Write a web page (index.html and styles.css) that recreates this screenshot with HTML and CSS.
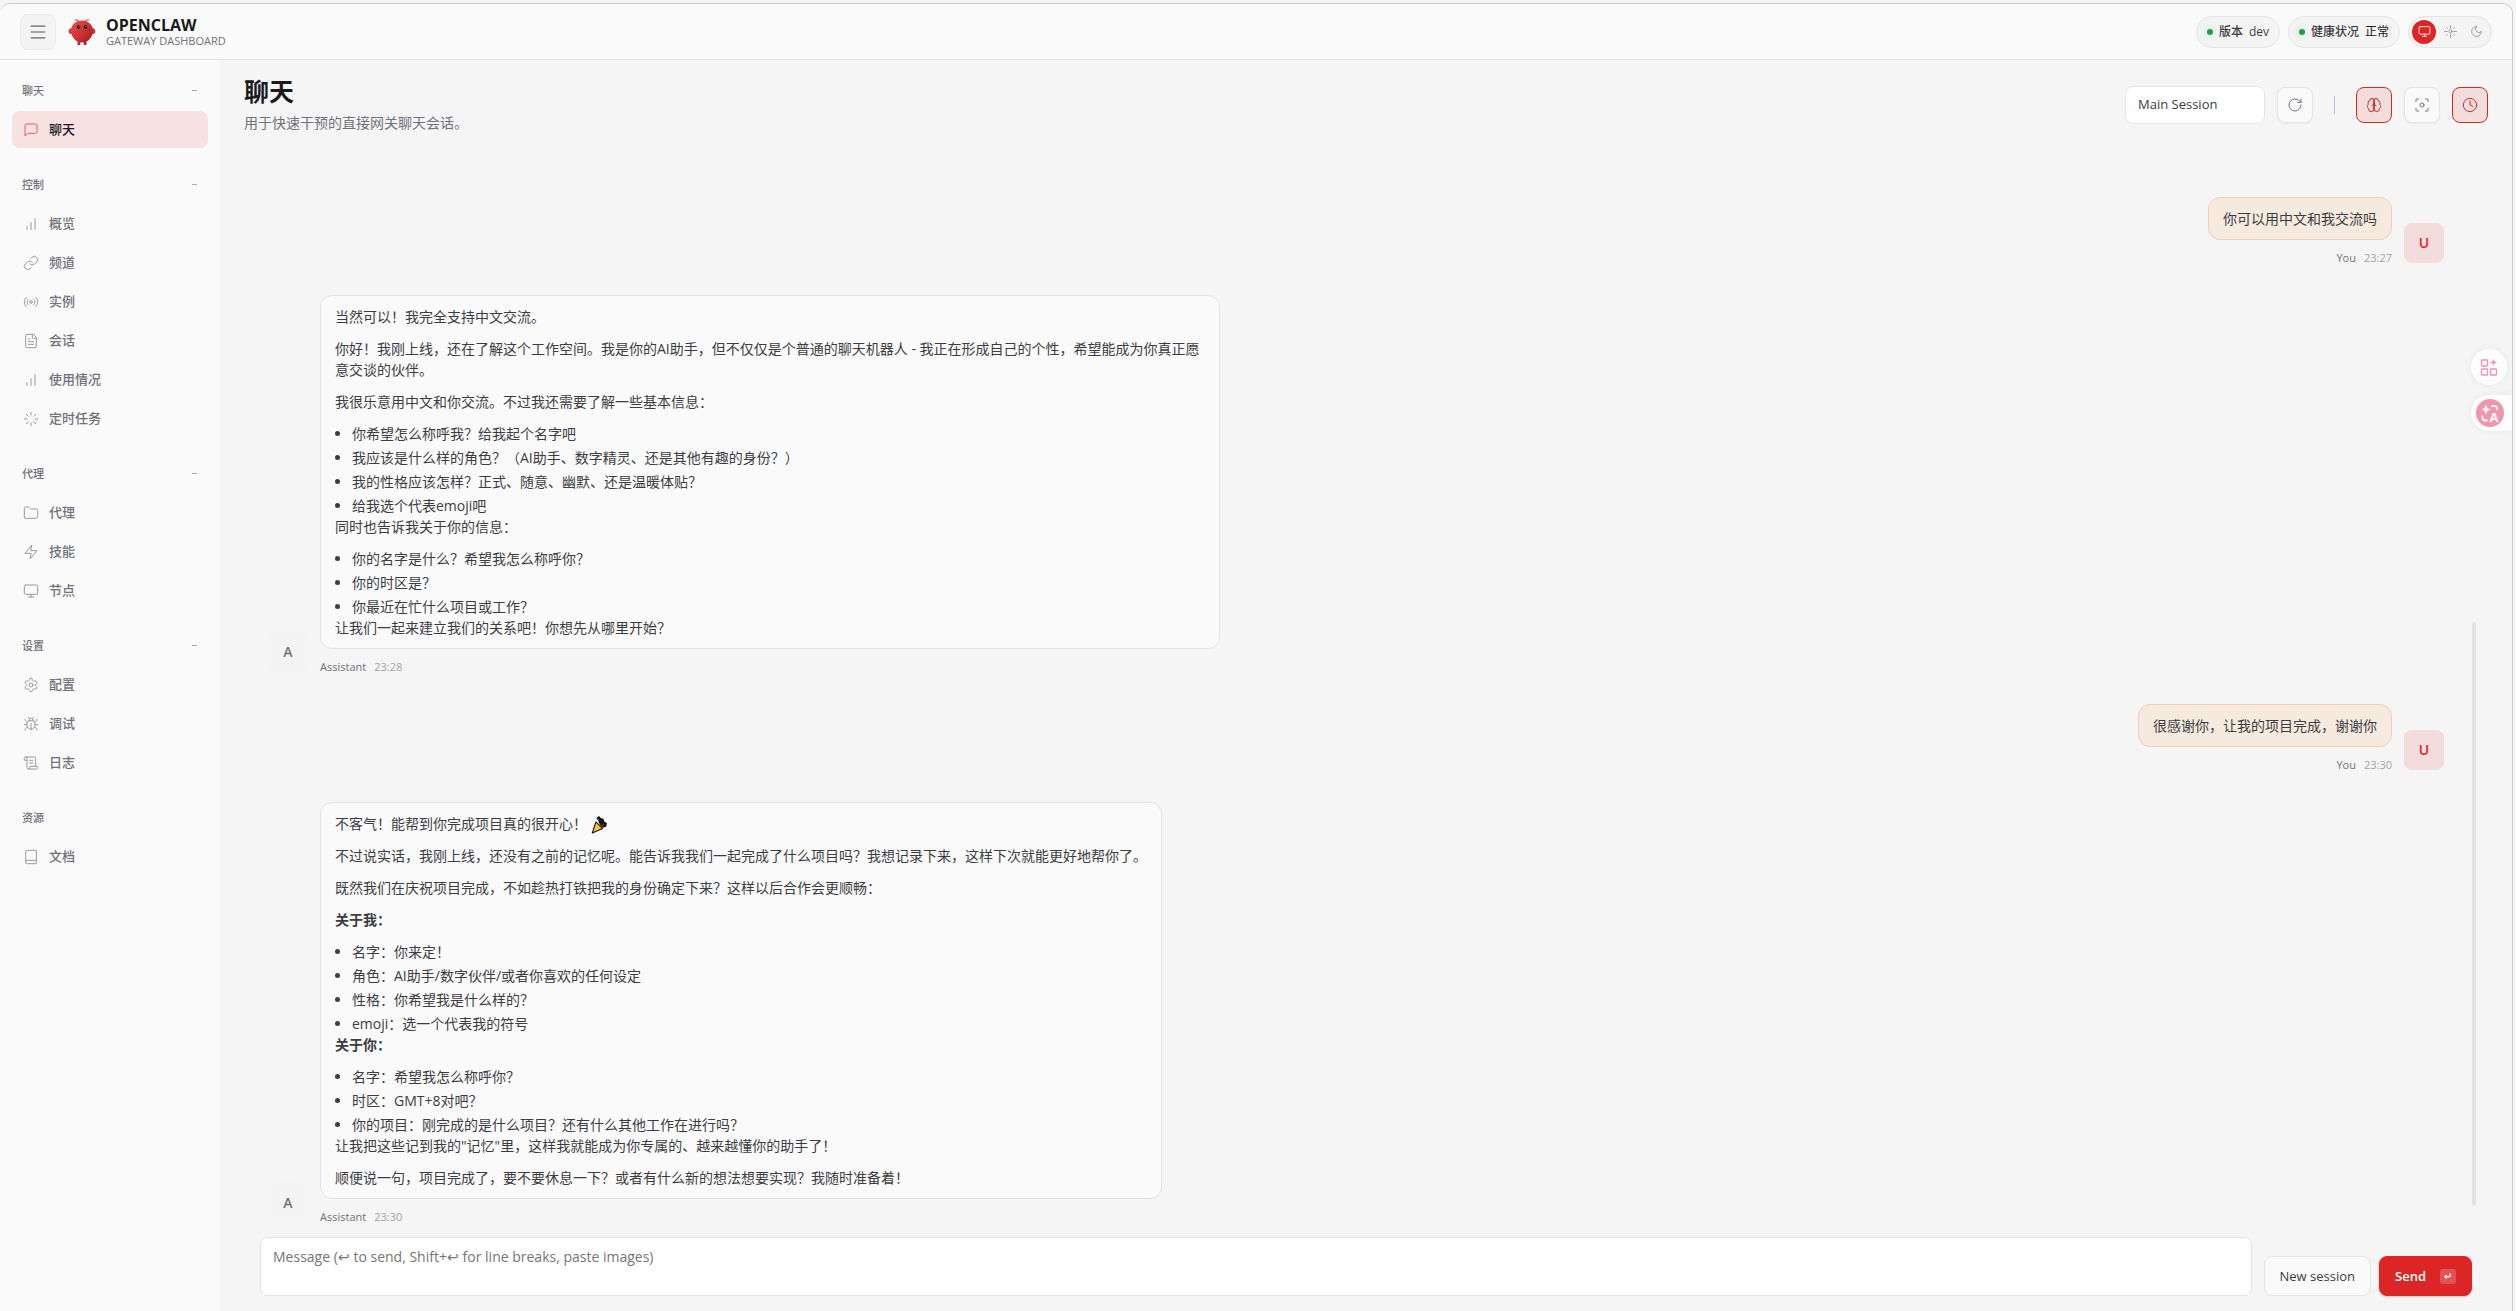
FILE: index.html
```html
<!DOCTYPE html>
<html lang="zh-CN">
	<head>
		<meta charset="UTF-8" />
		<meta name="viewport" content="width=device-width, initial-scale=1.0" />
		<title>OpenClaw Gateway Dashboard</title>
		<link rel="stylesheet" href="styles.css">
	</head>
	<body>
		<!-- shared icon shapes -->
		<svg class="sprite" aria-hidden="true">
			<symbol id="i-menu" viewBox="0 0 24 24"><path d="M4 5h16M4 12h16M4 19h16" /></symbol>
			<symbol id="i-chat" viewBox="0 0 24 24"><path d="M21 15a2 2 0 0 1-2 2H7l-4 4V5a2 2 0 0 1 2-2h14a2 2 0 0 1 2 2z" /></symbol>
			<symbol id="i-bars" viewBox="0 0 24 24"><path d="M12 20V10M18 20V4M6 20v-4" /></symbol>
			<symbol id="i-link" viewBox="0 0 24 24"><path d="M10 13a5 5 0 0 0 7.54.54l3-3a5 5 0 0 0-7.07-7.07l-1.72 1.71" /><path d="M14 11a5 5 0 0 0-7.54-.54l-3 3a5 5 0 0 0 7.07 7.07l1.71-1.71" /></symbol>
			<symbol id="i-radio" viewBox="0 0 24 24"><circle cx="12" cy="12" r="2" /><path d="M4.9 19.1C1 15.2 1 8.8 4.9 4.9M7.8 16.2c-2.3-2.3-2.3-6.1 0-8.5M16.2 7.8c2.3 2.3 2.3 6.1 0 8.5M19.1 4.9C23 8.8 23 15.1 19.1 19" /></symbol>
			<symbol id="i-file" viewBox="0 0 24 24"><path d="M15 2H6a2 2 0 0 0-2 2v16a2 2 0 0 0 2 2h12a2 2 0 0 0 2-2V7z" /><path d="M14 2v4a2 2 0 0 0 2 2h4M10 9H8M16 13H8M16 17H8" /></symbol>
			<symbol id="i-loader" viewBox="0 0 24 24"><path d="M12 2v4M12 18v4M4.93 4.93l2.83 2.83M16.24 16.24l2.83 2.83M2 12h4M18 12h4M4.93 19.07l2.83-2.83M16.24 7.76l2.83-2.83" /></symbol>
			<symbol id="i-folder" viewBox="0 0 24 24"><path d="M20 20a2 2 0 0 0 2-2V8a2 2 0 0 0-2-2h-7.9a2 2 0 0 1-1.69-.9L9.6 3.9A2 2 0 0 0 7.93 3H4a2 2 0 0 0-2 2v13a2 2 0 0 0 2 2z" /></symbol>
			<symbol id="i-zap" viewBox="0 0 24 24"><path d="M13 2 3 14h9l-1 8 10-12h-9z" /></symbol>
			<symbol id="i-monitor" viewBox="0 0 24 24"><rect x="2" y="3" width="20" height="14" rx="2" /><path d="M8 21h8M12 17v4" /></symbol>
			<symbol id="i-gear" viewBox="0 0 24 24"><path d="M12.22 2h-.44a2 2 0 0 0-2 2v.18a2 2 0 0 1-1 1.73l-.43.25a2 2 0 0 1-2 0l-.15-.08a2 2 0 0 0-2.73.73l-.22.38a2 2 0 0 0 .73 2.73l.15.1a2 2 0 0 1 1 1.72v.51a2 2 0 0 1-1 1.74l-.15.09a2 2 0 0 0-.73 2.73l.22.38a2 2 0 0 0 2.73.73l.15-.08a2 2 0 0 1 2 0l.43.25a2 2 0 0 1 1 1.73V20a2 2 0 0 0 2 2h.44a2 2 0 0 0 2-2v-.18a2 2 0 0 1 1-1.73l.43-.25a2 2 0 0 1 2 0l.15.08a2 2 0 0 0 2.73-.73l.22-.39a2 2 0 0 0-.73-2.73l-.15-.08a2 2 0 0 1-1-1.74v-.5a2 2 0 0 1 1-1.74l.15-.09a2 2 0 0 0 .73-2.73l-.22-.38a2 2 0 0 0-2.73-.73l-.15.08a2 2 0 0 1-2 0l-.43-.25a2 2 0 0 1-1-1.73V4a2 2 0 0 0-2-2z" /><circle cx="12" cy="12" r="3" /></symbol>
			<symbol id="i-bug" viewBox="0 0 24 24"><path d="m8 2 1.88 1.88M14.12 3.88 16 2M9 7.13v-1a3 3 0 1 1 6 0v1" /><path d="M12 20c-3.3 0-6-2.7-6-6v-3a4 4 0 0 1 4-4h4a4 4 0 0 1 4 4v3c0 3.3-2.7 6-6 6M12 20v-9" /><path d="M6.53 9C4.6 8.8 3 7.1 3 5M6 13H2M3 21c0-2.1 1.7-3.9 3.8-4M20.97 5c0 2.1-1.6 3.8-3.5 4M22 13h-4M17.2 17c2.1.1 3.8 1.9 3.8 4" /></symbol>
			<symbol id="i-scroll" viewBox="0 0 24 24"><path d="M15 12h-5M15 8h-5M19 17V5a2 2 0 0 0-2-2H4" /><path d="M8 21h12a2 2 0 0 0 2-2v-1a1 1 0 0 0-1-1H11a1 1 0 0 0-1 1v1a2 2 0 1 1-4 0V5a2 2 0 1 0-4 0v2a1 1 0 0 0 1 1h3" /></symbol>
			<symbol id="i-book" viewBox="0 0 24 24"><path d="M4 19.5v-15A2.5 2.5 0 0 1 6.5 2H19a1 1 0 0 1 1 1v18a1 1 0 0 1-1 1H6.5a2.5 2.5 0 0 1 0-5H20" /></symbol>
			<symbol id="i-sun" viewBox="0 0 24 24"><circle cx="12" cy="12" r="3" /><path d="M12 1v5M12 18v5M1 12h5M18 12h5M4.6 4.6l1.6 1.6M17.8 17.8l1.6 1.6M4.6 19.4l1.6-1.6M17.8 6.2l1.6-1.6" /></symbol>
			<symbol id="i-moon" viewBox="0 0 24 24"><path d="M12 3a6 6 0 0 0 9 9 9 9 0 1 1-9-9z" /></symbol>
			<symbol id="i-refresh" viewBox="0 0 24 24"><path d="M21 12a9 9 0 1 1-9-9c2.52 0 4.93 1 6.74 2.74L21 8" /><path d="M21 3v5h-5" /></symbol>
			<symbol id="i-brain" viewBox="0 0 24 24"><path d="M12 5a3 3 0 1 0-5.997.125 4 4 0 0 0-2.526 5.77 4 4 0 0 0 .556 6.588A4 4 0 1 0 12 18z" /><path d="M12 5a3 3 0 1 1 5.997.125 4 4 0 0 1 2.526 5.77 4 4 0 0 1-.556 6.588A4 4 0 1 1 12 18z" /><path d="M15 13a4.5 4.5 0 0 1-3-4 4.500 4.500 0 0 1-3 4M12 5v13" /></symbol>
			<symbol id="i-focus" viewBox="0 0 24 24"><path d="M3 7V4a1 1 0 0 1 1-1h3M17 3h3a1 1 0 0 1 1 1v3M21 17v3a1 1 0 0 1-1 1h-3M7 21H4a1 1 0 0 1-1-1v-3" /><circle cx="12" cy="12" r="3" /></symbol>
			<symbol id="i-clock" viewBox="0 0 24 24"><circle cx="12" cy="12" r="10" /><path d="M12 6v6l4 2" /></symbol>
		</svg>

		<div class="window">
			<header class="topbar">
				<button class="menu-btn" type="button" aria-label="菜单"><svg class="icon icon-lg"><use href="#i-menu" /></svg></button>
				<div class="brand">
					<svg class="logo" viewBox="0 0 28 28" aria-hidden="true">
						<defs>
							<linearGradient id="claw" x1="0" y1="0" x2="1" y2="1">
								<stop offset="0" stop-color="#f84a4a" />
								<stop offset="1" stop-color="#981b1b" />
							</linearGradient>
						</defs>
						<path d="M11 4C10 2 9 1.500 7 2M17 4c1-2 2-2.500 4-2" fill="none" stroke="#ee6a62" stroke-width="1.200" stroke-linecap="round" />
						<path d="M4.500 10.500C1.500 9.500.200 12 .700 14.200c.500 1.900 2.800 2.300 4.600 1.300zM23.500 10.500c3-1 4.300 1.500 3.800 3.700-.5 1.900-2.800 2.300-4.600 1.300z" fill="#d93636" />
						<path d="M14 2.500c6.500 0 11 4.500 11 10.500 0 4.500-3 8.500-6.500 10.500v3.500h-2.800v-2.700c-1 .3-2.400.3-3.400 0V27H9.500v-3.500C6 21.500 3 17.500 3 13 3 7 7.500 2.500 14 2.500z" fill="url(#claw)" />
						<circle cx="10.500" cy="9" r="1.800" fill="#0b1a1c" />
						<circle cx="17.500" cy="9" r="1.800" fill="#0b1a1c" />
						<circle cx="10.800" cy="8.700" r=".7" fill="#1fb7a4" />
						<circle cx="17.800" cy="8.700" r=".7" fill="#1fb7a4" />
					</svg>
					<div class="brand-text">
						<div class="brand-title">OPENCLAW</div>
						<div class="brand-sub">GATEWAY DASHBOARD</div>
					</div>
				</div>
				<div class="status">
					<div class="pill"><span class="dot"></span><span class="pill-label">版本</span><span>dev</span></div>
					<div class="pill"><span class="dot"></span><span class="pill-label">健康状况</span><span class="pill-value">正常</span></div>
					<div class="theme">
						<button class="theme-btn active" type="button" aria-label="System"><svg class="icon icon-sm"><use href="#i-monitor" /></svg></button>
						<button class="theme-btn" type="button" aria-label="Light"><svg class="icon icon-sm"><use href="#i-sun" /></svg></button>
						<button class="theme-btn" type="button" aria-label="Dark"><svg class="icon icon-sm"><use href="#i-moon" /></svg></button>
					</div>
				</div>
			</header>

			<div class="shell">
				<nav class="sidebar">
					<section class="nav-group">
						<button class="nav-label" type="button"><span>聊天</span><span class="fold"></span></button>
						<a class="nav-item active" href="#chat"><svg class="icon"><use href="#i-chat" /></svg>聊天</a>
					</section>
					<section class="nav-group">
						<button class="nav-label" type="button"><span>控制</span><span class="fold"></span></button>
						<a class="nav-item" href="#overview"><svg class="icon"><use href="#i-bars" /></svg>概览</a>
						<a class="nav-item" href="#channels"><svg class="icon"><use href="#i-link" /></svg>频道</a>
						<a class="nav-item" href="#instances"><svg class="icon"><use href="#i-radio" /></svg>实例</a>
						<a class="nav-item" href="#sessions"><svg class="icon"><use href="#i-file" /></svg>会话</a>
						<a class="nav-item" href="#usage"><svg class="icon"><use href="#i-bars" /></svg>使用情况</a>
						<a class="nav-item" href="#cron"><svg class="icon"><use href="#i-loader" /></svg>定时任务</a>
					</section>
					<section class="nav-group">
						<button class="nav-label" type="button"><span>代理</span><span class="fold"></span></button>
						<a class="nav-item" href="#agents"><svg class="icon"><use href="#i-folder" /></svg>代理</a>
						<a class="nav-item" href="#skills"><svg class="icon"><use href="#i-zap" /></svg>技能</a>
						<a class="nav-item" href="#nodes"><svg class="icon"><use href="#i-monitor" /></svg>节点</a>
					</section>
					<section class="nav-group">
						<button class="nav-label" type="button"><span>设置</span><span class="fold"></span></button>
						<a class="nav-item" href="#config"><svg class="icon"><use href="#i-gear" /></svg>配置</a>
						<a class="nav-item" href="#debug"><svg class="icon"><use href="#i-bug" /></svg>调试</a>
						<a class="nav-item" href="#logs"><svg class="icon"><use href="#i-scroll" /></svg>日志</a>
					</section>
					<section class="nav-group">
						<div class="nav-label"><span>资源</span></div>
						<a class="nav-item" href="#docs"><svg class="icon"><use href="#i-book" /></svg>文档</a>
					</section>
				</nav>

				<main class="content">
					<div class="page-head">
						<div>
							<h1>聊天</h1>
							<p class="page-sub">用于快速干预的直接网关聊天会话。</p>
						</div>
						<div class="controls">
							<select class="session" aria-label="Session">
								<option>Main Session</option>
							</select>
							<button class="tool" type="button" aria-label="Refresh"><svg class="icon"><use href="#i-refresh" /></svg></button>
							<span class="divider"></span>
							<button class="tool on" type="button" aria-label="Thinking"><svg class="icon"><use href="#i-brain" /></svg></button>
							<button class="tool" type="button" aria-label="Focus"><svg class="icon"><use href="#i-focus" /></svg></button>
							<button class="tool on" type="button" aria-label="Cron sessions"><svg class="icon"><use href="#i-clock" /></svg></button>
						</div>
					</div>

					<div class="thread">
						<div class="messages">
							<div class="msg user">
								<div class="avatar">U</div>
								<div class="msg-body">
									<div class="bubble"><p>你可以用中文和我交流吗</p></div>
									<div class="meta"><b>You</b><span>23:27</span></div>
								</div>
							</div>

							<div class="msg">
								<div class="avatar">A</div>
								<div class="msg-body">
									<div class="bubble">
										<p>当然可以！我完全支持中文交流。</p>
										<p>你好！我刚上线，还在了解这个工作空间。我是你的AI助手，但不仅仅是个普通的聊天机器人 - 我正在形成自己的个性，希望能成为你真正愿意交谈的伙伴。</p>
										<p>我很乐意用中文和你交流。不过我还需要了解一些基本信息：</p>
										<ul>
											<li>你希望怎么称呼我？给我起个名字吧</li>
											<li>我应该是什么样的角色？（AI助手、数字精灵、还是其他有趣的身份？）</li>
											<li>我的性格应该怎样？正式、随意、幽默、还是温暖体贴？</li>
											<li>给我选个代表emoji吧</li>
										</ul>
										<p>同时也告诉我关于你的信息：</p>
										<ul>
											<li>你的名字是什么？希望我怎么称呼你？</li>
											<li>你的时区是？</li>
											<li>你最近在忙什么项目或工作？</li>
										</ul>
										<p>让我们一起来建立我们的关系吧！你想先从哪里开始？</p>
									</div>
									<div class="meta"><b>Assistant</b><span>23:28</span></div>
								</div>
							</div>

							<div class="msg user">
								<div class="avatar">U</div>
								<div class="msg-body">
									<div class="bubble"><p>很感谢你，让我的项目完成，谢谢你</p></div>
									<div class="meta"><b>You</b><span>23:30</span></div>
								</div>
							</div>

							<div class="msg">
								<div class="avatar">A</div>
								<div class="msg-body">
									<div class="bubble">
										<p>不客气！能帮到你完成项目真的很开心！
											<svg class="party" viewBox="0 0 18 20" role="img" aria-label="🎉">
												<path d="M8 5 6 2l3-2 2 2 3 1 1 3 3 2-1 4-4 1-3-3z" fill="#141414" />
												<path d="M7 2.500 9.500 4 8 6z" fill="#1b6f93" />
												<path d="m12 8 3 1-1 3-3-1z" fill="#7a1a1a" />
												<path d="M5.500 6.500 13 14 1.500 19z" fill="#fbc42e" stroke="#141414" stroke-width="1.200" stroke-linejoin="round" />
											</svg>
										</p>
										<p>不过说实话，我刚上线，还没有之前的记忆呢。能告诉我我们一起完成了什么项目吗？我想记录下来，这样下次就能更好地帮你了。</p>
										<p>既然我们在庆祝项目完成，不如趁热打铁把我的身份确定下来？这样以后合作会更顺畅：</p>
										<p><strong>关于我：</strong></p>
										<ul>
											<li>名字：你来定！</li>
											<li>角色：AI助手/数字伙伴/或者你喜欢的任何设定</li>
											<li>性格：你希望我是什么样的？</li>
											<li>emoji：选一个代表我的符号</li>
										</ul>
										<p><strong>关于你：</strong></p>
										<ul>
											<li>名字：希望我怎么称呼你？</li>
											<li>时区：GMT+8对吧？</li>
											<li>你的项目：刚完成的是什么项目？还有什么其他工作在进行吗？</li>
										</ul>
										<p>让我把这些记到我的"记忆"里，这样我就能成为你专属的、越来越懂你的助手了！</p>
										<p>顺便说一句，项目完成了，要不要休息一下？或者有什么新的想法想要实现？我随时准备着！</p>
									</div>
									<div class="meta"><b>Assistant</b><span>23:30</span></div>
								</div>
							</div>
						</div>
						<div class="scroll-thumb"></div>
					</div>

					<form class="composer">
						<textarea aria-label="Message" placeholder="Message (↩ to send, Shift+↩ for line breaks, paste images)"></textarea>
						<button class="btn" type="button">New session</button>
						<button class="btn primary" type="button">Send<kbd>↵</kbd></button>
					</form>
				</main>
			</div>

			<!-- floating helper buttons over the right edge -->
			<div class="floaters">
				<button class="float-btn" type="button" aria-label="Apps">
					<svg viewBox="0 0 18 18" width="18" height="18" fill="none" stroke="#f194ae" stroke-width="1.300">
						<rect x="1.500" y="2" width="6" height="6" rx=".5" /><rect x="1.500" y="11" width="6" height="6" rx=".5" /><rect x="10.500" y="11" width="6" height="6" rx=".5" />
						<path d="M13.500.500c.500 2.800 1 3.300 3.800 3.900-2.800.600-3.300 1.100-3.800 3.900-.5-2.800-1-3.300-3.800-3.900 2.800-.6 3.300-1.100 3.800-3.900z" fill="#f194ae" stroke="none" />
					</svg>
				</button>
				<button class="float-btn docked" type="button" aria-label="Translate">
					<svg viewBox="0 0 28 28" width="28" height="28">
						<circle cx="14" cy="14" r="14" fill="#f194ae" />
						<path d="M10 5c.700 3.800 1.400 4.700 5 5.500-3.600.800-4.300 1.700-5 5.500-.7-3.800-1.400-4.700-5-5.500 3.600-.8 4.300-1.700 5-5.500z" fill="#fff" />
						<path d="M15.500 7h3a2.500 2.500 0 0 1 2.500 2.500V11M6.500 16.500v2.500a2.500 2.500 0 0 0 2.500 2.500h2.500" fill="none" stroke="#fff" stroke-width="1.800" />
						<text class="float-letter" x="13.500" y="22.500">A</text>
					</svg>
				</button>
			</div>
		</div>
	</body>
</html>
```
FILE: styles.css
```css
:root {
	--bg: #f5f5f5;
	--panel: #fafafa;
	--border: #e4e4e6;
	--text: #3c3c43;
	--strong: #1a1a1e;
	--muted: #71717a;
	--faint: #a1a1aa;
	--accent: #dc2626;
}

* {
	box-sizing: border-box;
}

body {
	margin: 0;
	background: var(--bg);
	color: var(--text);
	font-family: "Open Sans", "Noto Sans CJK SC", sans-serif;
	font-size: 14px;
	line-height: 21px;
}

button,
select,
textarea {
	font: inherit;
	color: inherit;
}

button {
	padding: 0;
	border: 0;
	background: none;
}

h1,
p,
ul {
	margin: 0;
	padding: 0;
}

.sprite {
	display: none;
}

.window {
	position: relative;
	display: flex;
	flex-direction: column;
	height: calc(100vh - 3px);
	margin: 3px 3px 0 0;
	border: 1px solid #c8c9cc;
	border-width: 1px 1px 0 0;
	border-radius: 10px 10px 0 0;
	overflow: hidden;
}

.icon {
	flex: none;
	width: 16px;
	height: 16px;
	fill: none;
	stroke: currentColor;
	stroke-width: 1.5px;
	stroke-linecap: round;
	stroke-linejoin: round;
}

.icon-lg {
	width: 20px;
	height: 20px;
	stroke-width: 2px;
}

.icon-sm {
	width: 13px;
	height: 13px;
}

/* top bar */
.topbar {
	display: flex;
	align-items: center;
	gap: 12px;
	height: 56px;
	flex: none;
	padding: 0 20px;
	background: var(--panel);
	border-bottom: 1px solid var(--border);
}

.menu-btn {
	display: grid;
	place-items: center;
	width: 36px;
	height: 36px;
	border: 1px solid #ececee;
	border-radius: 8px;
	background: #f4f4f5;
	color: #8b8b93;
}

.brand {
	display: flex;
	align-items: center;
	gap: 10px;
}

.logo {
	width: 28px;
	height: 28px;
}

.brand-title {
	color: var(--strong);
	font-size: 16px;
	font-weight: 700;
	line-height: 17px;
}

.brand-sub {
	color: var(--muted);
	font-size: 11px;
	line-height: 13px;
}

.status {
	display: flex;
	gap: 8px;
	margin-left: auto;
}

.pill {
	display: flex;
	align-items: center;
	gap: 6px;
	height: 32px;
	padding: 0 10px;
	border: 1px solid var(--border);
	border-radius: 16px;
	background: #f4f4f4;
	font-size: 12px;
}

.dot {
	width: 6px;
	height: 6px;
	border-radius: 50%;
	background: #16a34a;
	box-shadow: 0 0 8px rgba(22, 163, 74, 0.3);
}

.pill-label {
	font-weight: 500;
}

.pill-value {
	color: var(--strong);
}

.theme {
	display: flex;
	gap: 2px;
	padding: 3px;
	border: 1px solid var(--border);
	border-radius: 16px;
	background: #f4f4f4;
}

.theme-btn {
	display: grid;
	place-items: center;
	width: 24px;
	height: 24px;
	border-radius: 50%;
	color: #8b8b93;
}

.theme-btn.active {
	background: var(--accent);
	color: #fff;
}

/* sidebar */
.shell {
	display: flex;
	flex: 1;
	min-height: 0;
}

.sidebar {
	flex: none;
	width: 220px;
	padding: 15px 12px;
	background: var(--panel);
}

.nav-group {
	display: flex;
	flex-direction: column;
	gap: 2px;
	margin-bottom: 21px;
}

.nav-label {
	display: flex;
	align-items: center;
	justify-content: space-between;
	height: 30px;
	margin-bottom: 4px;
	padding: 0 11px 0 10px;
	color: var(--muted);
	font-size: 11px;
	font-weight: 500;
}

.fold {
	width: 5px;
	height: 1px;
	background: #a8a8ae;
}

.nav-item {
	display: flex;
	align-items: center;
	gap: 10px;
	height: 37px;
	padding: 0 11px;
	border-radius: 8px;
	color: var(--muted);
	font-size: 13px;
	font-weight: 500;
	text-decoration: none;
}

.nav-item .icon {
	opacity: 0.7;
}

.nav-item.active {
	background: #f8e1e1;
	color: var(--strong);
}

.nav-item.active .icon {
	color: var(--accent);
}

/* page */
.content {
	display: flex;
	flex-direction: column;
	flex: 1;
	min-width: 0;
	padding: 16px 24px 15px;
}

.page-head {
	display: flex;
	align-items: center;
	justify-content: space-between;
	margin-bottom: 12px;
}

h1 {
	margin-bottom: 6px;
	color: var(--strong);
	font-size: 25px;
	font-weight: 700;
	line-height: 30px;
}

.page-sub {
	color: var(--muted);
}

.controls {
	display: flex;
	align-items: center;
	gap: 12px;
}

.session {
	appearance: none;
	width: 140px;
	height: 38px;
	padding: 0 12px;
	border: 1px solid var(--border);
	border-radius: 8px;
	background: #fff;
	font-size: 13px;
}

.tool {
	display: grid;
	place-items: center;
	width: 36px;
	height: 36px;
	border: 1px solid var(--border);
	border-radius: 8px;
	background: var(--panel);
	box-shadow: 0 1px 2px rgba(0, 0, 0, 0.05);
	color: var(--muted);
}

.tool.on {
	border-color: var(--accent);
	background: #f3dcdc;
	box-shadow: none;
	color: var(--accent);
}

.divider {
	width: 1px;
	height: 18px;
	margin: 0 9px;
	background: #bcbcca;
}

/* chat thread */
.thread {
	display: flex;
	align-items: flex-end;
	flex: 1;
	min-height: 0;
	margin-right: 12px;
}

.messages {
	display: flex;
	flex-direction: column;
	justify-content: flex-end;
	gap: 28px;
	flex: 1;
	min-width: 0;
	height: 100%;
	padding: 0 28px 0 24px;
	overflow: hidden;
}

.scroll-thumb {
	width: 4px;
	height: 54%;
	margin-bottom: 20px;
	border-radius: 4px;
	background: #e3e3e4;
}

.msg {
	display: flex;
	align-items: flex-end;
	gap: 12px;
}

.msg.user {
	flex-direction: row-reverse;
}

.avatar {
	display: grid;
	place-items: center;
	flex: none;
	width: 40px;
	height: 40px;
	margin-bottom: 4px;
	border-radius: 8px;
	background: #f4f4f4;
	color: var(--muted);
	font-weight: 600;
}

.user .avatar {
	background: #f3dcdc;
	color: var(--accent);
}

.msg-body {
	display: flex;
	flex-direction: column;
	align-items: flex-start;
	max-width: 900px;
}

.user .msg-body {
	align-items: flex-end;
}

.bubble {
	padding: 10px 14px;
	border: 1px solid var(--border);
	border-radius: 12px;
	background: var(--panel);
}

.user .bubble {
	border-color: #f3ceb8;
	background: #f6e9dd;
}

.bubble p + p,
.bubble ul {
	margin-top: 11px;
}

.bubble ul {
	padding-left: 17px;
}

.bubble li + li {
	margin-top: 3px;
}

.party {
	width: 16px;
	height: 18px;
	vertical-align: middle;
}

.meta {
	display: flex;
	gap: 8px;
	margin-top: 8px;
	color: var(--faint);
	font-size: 11px;
	line-height: 19px;
}

.meta b {
	color: var(--muted);
	font-weight: 500;
}

/* composer */
.composer {
	display: flex;
	align-items: flex-end;
	gap: 8px;
	margin: 11px 16px 0;
}

textarea {
	flex: 1;
	height: 59px;
	margin-right: 4px;
	padding: 8px 12px;
	border: 1px solid var(--border);
	border-radius: 8px;
	background: #fff;
	resize: none;
}

textarea::placeholder {
	color: #757575;
}

.btn {
	height: 40px;
	padding: 0 15px;
	border: 1px solid var(--border);
	border-radius: 8px;
	background: var(--panel);
	font-size: 13px;
	font-weight: 500;
}

.btn.primary {
	display: flex;
	align-items: center;
	gap: 14px;
	border-color: var(--accent);
	background: var(--accent);
	box-shadow: 0 1px 2px rgba(0, 0, 0, 0.2);
	color: #fff;
	font-weight: 600;
}

kbd {
	width: 16px;
	height: 15px;
	border-radius: 3px;
	background: rgba(255, 255, 255, 0.2);
	font-family: "DejaVu Sans", sans-serif;
	font-size: 10px;
	line-height: 15px;
	text-align: center;
}

/* floating buttons */
.floaters {
	position: absolute;
	top: 345px;
	right: 0;
	display: flex;
	flex-direction: column;
	gap: 10px;
}

.float-btn {
	display: grid;
	place-items: center;
	width: 36px;
	height: 36px;
	border-radius: 18px;
	background: #fdfdfd;
	box-shadow: 0 0 8px rgba(0, 0, 0, 0.06);
}

.float-btn.docked {
	width: 41px;
	padding-right: 3px;
	border-radius: 18px 0 0 18px;
}

.float-letter {
	fill: #fff;
	font-family: "Noto Sans", sans-serif;
	font-size: 13px;
	font-weight: 700;
}
```
